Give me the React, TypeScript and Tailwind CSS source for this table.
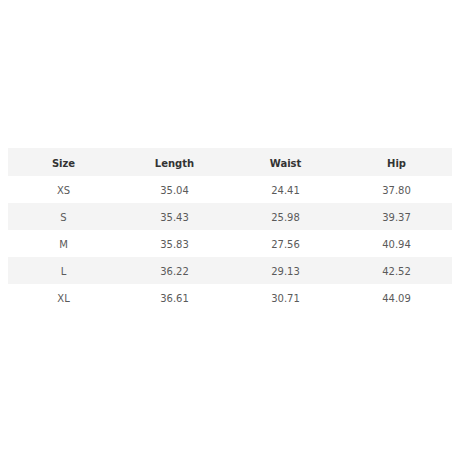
const ROWS = [
  ['XS', '35.04', '24.41', '37.80'],
  ['S', '35.43', '25.98', '39.37'],
  ['M', '35.83', '27.56', '40.94'],
  ['L', '36.22', '29.13', '42.52'],
  ['XL', '36.61', '30.71', '44.09'],
]

export default function App() {
  return (
    <div className="w-[460px] h-[460px] bg-white pt-[148px] px-[8px] font-['DejaVu_Sans',Verdana,sans-serif]">
      <div className="grid grid-cols-4 h-[28px] pt-[2px] items-center bg-[#f4f4f4] text-[10px] font-bold text-[#333]">
        <div className="text-center">Size</div>
        <div className="text-center">Length</div>
        <div className="text-center">Waist</div>
        <div className="text-center">Hip</div>
      </div>
      {ROWS.map((row, i) => (
        <div
          key={row[0]}
          className={`grid grid-cols-4 h-[27px] pt-[2px] items-center text-[10px] text-[#5a5a5a] ${
            i % 2 === 1 ? 'bg-[#f4f4f4]' : 'bg-white'
          }`}
        >
          {row.map((cell, j) => (
            <div key={j} className="text-center">
              {cell}
            </div>
          ))}
        </div>
      ))}
    </div>
  )
}
